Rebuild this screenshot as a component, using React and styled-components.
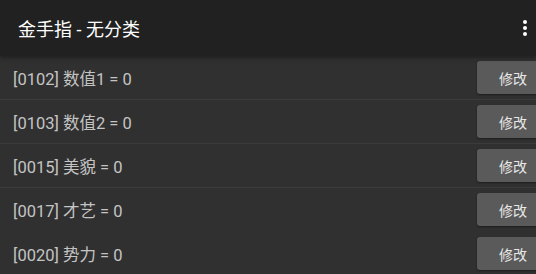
import React from "react";
import styled, { createGlobalStyle } from "styled-components";

const GlobalStyle = createGlobalStyle`
  html, body {
    margin: 0;
    padding: 0;
    background: #303030;
  }
  body {
    font-family: Roboto, "Noto Sans CJK SC", sans-serif;
    overflow: hidden;
  }
`;

const cheats = [
  { id: "0102", name: "数值1", value: 0, divider: true },
  { id: "0103", name: "数值2", value: 0, divider: true },
  { id: "0015", name: "美貌", value: 0, divider: true },
  { id: "0017", name: "才艺", value: 0, divider: false },
  { id: "0020", name: "势力", value: 0, divider: false },
];

function App() {
  return (
    <Page>
      <GlobalStyle />
      <Toolbar>
        <Title>金手指 - 无分类</Title>
        <MenuButton aria-label="更多">
          <svg width="4" height="16" viewBox="0 0 4 16">
            <circle cx="2" cy="2" r="2" fill="#fff" />
            <circle cx="2" cy="8" r="2" fill="#fff" />
            <circle cx="2" cy="14" r="2" fill="#fff" />
          </svg>
        </MenuButton>
      </Toolbar>
      <List>
        {cheats.map((c) => (
          <Row key={c.id} divider={c.divider}>
            <Label>[{c.id}] {c.name} = {c.value}</Label>
            <EditButton>修改</EditButton>
          </Row>
        ))}
      </List>
    </Page>
  );
}

const Page = styled.div`
  width: 536px;
  height: 274px;
  background: #303030;
  overflow: hidden;
`;

const Toolbar = styled.div`
  height: 56px;
  background: #212121;
  display: flex;
  align-items: center;
  justify-content: space-between;
  padding: 0 9px 0 18px;
  box-sizing: border-box;
  box-shadow: 0 2px 4px rgba(0, 0, 0, 0.35);
  position: relative;
  z-index: 1;
`;

const Title = styled.div`
  color: #ffffff;
  font-size: 18px;
  font-weight: 400;
`;

const MenuButton = styled.div`
  display: flex;
  align-items: center;
  height: 16px;
  padding: 0;
  margin-top: -1px;
`;

const List = styled.div`
  display: flex;
  flex-direction: column;
`;

const Row = styled.div`
  height: 44px;
  display: flex;
  align-items: center;
  justify-content: space-between;
  padding-left: 13px;
  box-sizing: border-box;
  border-bottom: 1px solid ${(p) => (p.divider ? "#3b3b3b" : "transparent")};
`;

const Label = styled.div`
  color: #c4c4c4;
  font-size: 16.5px;
`;

const EditButton = styled.div`
  width: 72px;
  height: 33px;
  margin-right: -13px;
  background: #5a5a5a;
  border-radius: 3px;
  color: #e8e8e8;
  font-size: 14px;
  display: flex;
  align-items: center;
  justify-content: center;
  box-shadow: 0 1px 2px rgba(0, 0, 0, 0.4);
`;

export default App;
